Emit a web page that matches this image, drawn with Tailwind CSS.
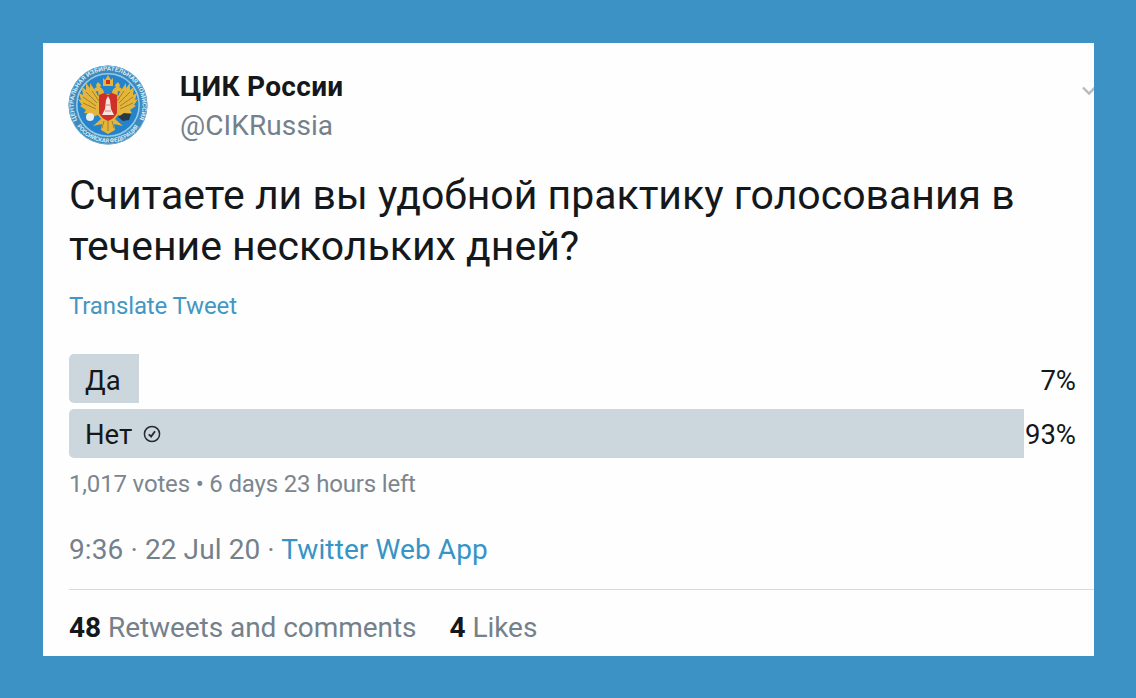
<!DOCTYPE html>
<html lang="ru">
<head>
    <meta charset="UTF-8">
    <meta name="viewport" content="width=device-width, initial-scale=1.0">
    <title>ЦИК России</title>
    <script src="https://cdn.jsdelivr.net/npm/@tailwindcss/browser@4"></script>
</head>
<body class="bg-[#3c92c4] w-[1136px] h-[698px] overflow-hidden p-[43px] pb-[42px] pr-[42px] font-['Roboto',sans-serif] text-[#15181b]">

    <article class="bg-[#fefefe] h-[613px] pl-[26px] pt-[21px] overflow-hidden whitespace-nowrap">

        <!-- Author -->
        <header class="flex h-[82px]">
            <svg class="w-20 h-20 shrink-0 -ml-px mt-px" viewBox="0 0 80 80">
                <defs>
                    <path id="ringTop" d="M10.1 57 A34.4 34.4 0 1 1 69.9 57" />
                    <path id="ringBottom" d="M6 56 A37.6 37.6 0 0 0 74 56" />
                </defs>
                <circle cx="40" cy="40" r="39.5" fill="#3f8abd" />
                <circle cx="40" cy="40" r="39" fill="none" stroke="#75b2d6" stroke-width="0.8" />
                <circle cx="40" cy="40" r="31.2" fill="#2483cb" stroke="#93cbe8" stroke-width="1.6" />
                <g fill="#d5edf7" font-family="Roboto, sans-serif" font-weight="700" font-size="5.8">
                    <text><textPath href="#ringTop" startOffset="2" textLength="138" lengthAdjust="spacingAndGlyphs">ЦЕНТРАЛЬНАЯ ИЗБИРАТЕЛЬНАЯ КОМИССИЯ</textPath></text>
                    <text><textPath href="#ringBottom" startOffset="6" textLength="72" lengthAdjust="spacingAndGlyphs">РОССИЙСКАЯ ФЕДЕРАЦИЯ</textPath></text>
                </g>
                <!-- wings and tail -->
                <g fill="#e3b63b">
                    <path d="M34 29 L30 31 L28 27 L22 18 L22 23 L18 18 L18 25 L14 22 L15 30 L11 28 L13 35 L10 34 L14 40 L12 41 L18 45 L16 48 L24 49 L22 53 L30 50 L33 54 L25 61 L34 59 L33 65 L40 69 L47 65 L46 59 L55 61 L47 54 L50 50 L58 53 L56 49 L64 48 L62 45 L68 41 L66 40 L70 34 L67 35 L69 28 L65 30 L66 22 L62 25 L62 18 L58 23 L58 18 L52 27 L50 31 L46 29 Z" />
                    <path d="M36 31 C37 24 32 20 27 23 L25 27 L30 26 L31 33 Z M44 31 C43 24 48 20 53 23 L55 27 L50 26 L49 33 Z" />
                    <path d="M35 13 L37 15 L40 10 L43 15 L45 13 L45 21 H35 Z M28 20 L30 17 L33 20 L32 23 H29 Z M47 20 L50 17 L52 20 L51 23 H48 Z" />
                </g>
                <g fill="none" stroke="#9b792d" stroke-width="0.9">
                    <path d="M18 27 L29 38 M15 32 L28 41 M15 38 L28 44 M24 26 L31 36 M62 27 L51 38 M65 32 L52 41 M65 38 L52 44 M56 26 L49 36 M36 56 L34 63 M40 56 V66 M44 56 L46 63" />
                </g>
                <path d="M38 15 H42 V19 H38 Z M31 30 L36 28 L40 30 L44 28 L49 30 V48 Q47 53 40 56 Q33 53 31 48 Z" fill="#cf3128" />
                <path d="M40 31 L42 35 L43 44 L46 50 H34 L37 44 L38 35 Z" fill="#f6e4de" />
                <path d="M37 46 H43 M38 40 H42" stroke="#ce6d60" stroke-width="0.8" />
                <circle cx="22" cy="52" r="4" fill="#e7edf0" />
                <path d="M56 48 L63 49 L61 55 L55 56 L50 52 Z" fill="#26384a" />
            </svg>
            <div class="ml-8 grow pt-[5px]">
                <div class="text-[28px] leading-[36px] font-bold tracking-[0.3px]">ЦИК России</div>
                <div class="text-[28px] leading-[40px] text-[#74818b] tracking-[0.1px] pt-px">@CIKRussia</div>
            </div>
            <svg class="w-4 h-3 mt-[21px] -mr-[3px] shrink-0" viewBox="0 0 16 12" fill="none" stroke="#b3bbc0" stroke-width="2.4">
                <path d="M2 2.5 L8 8.5 L14 2.5" />
            </svg>
        </header>

        <!-- Tweet text -->
        <p class="mt-[24px] text-[41px] leading-[51px]">Считаете ли вы удобной практику голосования в<br>течение нескольких дней?</p>
        <div class="mt-[14px] text-[24px] leading-[40px] tracking-[-0.12px] text-[#4397c1]">Translate Tweet</div>

        <!-- Poll -->
        <div class="mt-[28px] mr-[18px] flex flex-col gap-[6px] text-[27.5px] leading-[49px]">
            <div class="flex justify-between h-[49px]">
                <div class="bg-[#ccd6dd] rounded-l-[5px] pl-4 pt-[2px]" style="width: 70px">Да</div>
                <div class="pt-[2px]">7%</div>
            </div>
            <div class="flex justify-between h-[49px]">
                <div class="bg-[#ccd6dd] rounded-l-[5px] pl-4 flex items-center gap-[11px]" style="width: 955px">
                    <span class="pt-[2px]">Нет</span>
                    <svg class="w-[18px] h-[18px]" viewBox="0 0 18 18" fill="none" stroke="#252b30">
                        <circle cx="9" cy="9" r="7.6" stroke-width="1.5" />
                        <path d="M5.8 9.4 L8.1 11.5 L12 6.2" stroke-width="1.9" />
                    </svg>
                </div>
                <div class="pt-px">93%</div>
            </div>
        </div>
        <div class="mt-[7px] text-[24px] leading-[38px] tracking-[-0.17px] text-[#7b868f]">1,017 votes • 6 days 23 hours left</div>

        <div class="mt-[27px] text-[28px] leading-[40px] text-[#74818b] tracking-[0.1px]">9:36 · 22 Jul 20 · <span class="text-[#3694c6]">Twitter Web App</span></div>

        <!-- Counters -->
        <footer class="mt-[19px] border-t border-[#d8dcdf] pt-[18px] flex gap-[33px] text-[28px] leading-[40px] tracking-[-0.05px] text-[#74818b]">
            <span><b class="text-[#15181b]">48</b> Retweets and comments</span>
            <span><b class="text-[#15181b]">4</b> Likes</span>
        </footer>
    </article>

</body>
</html>
